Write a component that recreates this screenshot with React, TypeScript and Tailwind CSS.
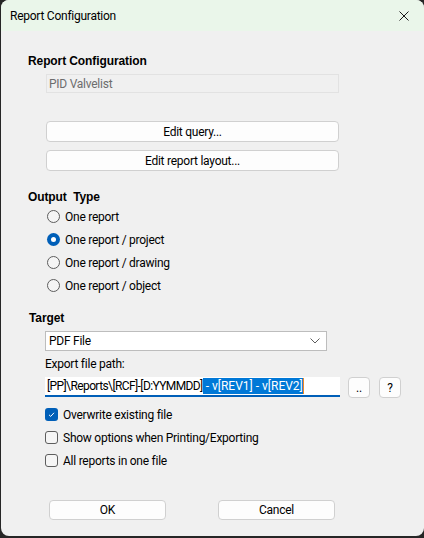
import { useState } from 'react';

const ui = { fontFamily: 'Roboto, "Noto Sans", sans-serif', letterSpacing: '-0.25px' };
const head = { fontFamily: '"Liberation Sans", Arial, sans-serif', letterSpacing: '-0.1px' };

function Radio({ label, checked }: { label: string; checked?: boolean }) {
  return (
    <div className="flex items-center h-[23px] pl-[46px]">
      {checked ? (
        <span className="w-[13px] h-[13px] rounded-full bg-[#005fb8] flex items-center justify-center">
          <span className="w-[5px] h-[5px] rounded-full bg-white" />
        </span>
      ) : (
        <span className="w-[13px] h-[13px] rounded-full border border-[#5d5d5d] bg-[#f5f5f5]" />
      )}
      <span className="ml-[5px] text-[12px] text-black">{label}</span>
    </div>
  );
}

function Check({ label, checked }: { label: string; checked?: boolean }) {
  return (
    <div className="flex items-center h-[23px] pl-[44px]">
      {checked ? (
        <span className="w-[13px] h-[13px] rounded-[3px] bg-[#005fb8] flex items-center justify-center">
          <svg width="9" height="9" viewBox="0 0 9 9">
            <path d="M2 4.8 L3.7 6.4 L7 2.8" fill="none" stroke="#fff" strokeWidth="1" />
          </svg>
        </span>
      ) : (
        <span className="w-[13px] h-[13px] rounded-[3px] border border-[#5d5d5d] bg-[#f5f5f5]" />
      )}
      <span className="ml-[5px] text-[12px] text-black">{label}</span>
    </div>
  );
}

function Btn({ children, className }: { children: React.ReactNode; className: string }) {
  return (
    <div
      className={`bg-[#fdfdfd] border border-[#d0d0d0] rounded-[4px] flex items-center justify-center text-[12px] text-black ${className}`}
    >
      {children}
    </div>
  );
}

export default function App() {
  const [target] = useState('PDF File');

  return (
    <div className="w-[424px] h-[538px] bg-[#262626] pl-px" style={ui}>
      <div className="w-[423px] h-[536px] rounded-[8px] bg-[#f0f0f0] overflow-hidden flex flex-col">
        {/* Title bar */}
        <div className="h-[31px] bg-[#eaf6ea] flex items-center justify-between pl-[9px] pr-[15px]">
          <span className="text-[12px] text-black">Report Configuration</span>
          <svg width="10" height="10" viewBox="0 0 10 10">
            <path d="M0.5 0.5 L9.5 9.5 M9.5 0.5 L0.5 9.5" stroke="#1a1a1a" strokeWidth="1" />
          </svg>
        </div>

        {/* Report configuration */}
        <div className="mt-[22px] pl-[27px] text-[12px] leading-[16px] font-bold text-black" style={head}>
          Report Configuration
        </div>
        <div className="mt-[5px] ml-[45px] w-[293px] h-[19px] border border-[#e2e2e2] flex items-center pl-[2px] text-[12px] text-[#6d6d6d]">
          PID Valvelist
        </div>
        <Btn className="mt-[28px] ml-[45px] w-[293px] h-[21px]">Edit query...</Btn>
        <Btn className="mt-[8px] ml-[45px] w-[293px] h-[21px]">Edit report layout...</Btn>

        {/* Output type */}
        <div className="mt-[18px] pl-[27px] text-[12px] leading-[16px] font-bold text-black" style={head}>
          Output&nbsp;&nbsp;Type
        </div>
        <Radio label="One report" />
        <Radio label="One report / project" checked />
        <Radio label="One report / drawing" />
        <Radio label="One report / object" />

        {/* Target */}
        <div className="mt-[13px] pl-[28px] text-[12px] leading-[16px] font-bold text-black" style={head}>
          Target
        </div>
        <div className="mt-[5px] ml-[44px] w-[282px] h-[20px] bg-white border border-[#bdbdbd] flex items-center justify-between pl-[3px] pr-[6px] text-[12px] text-black">
          <span>{target}</span>
          <svg width="10" height="6" viewBox="0 0 10 6">
            <path d="M0.5 0.5 L5 5 L9.5 0.5" fill="none" stroke="#5d5d5d" strokeWidth="1" />
          </svg>
        </div>
        <div className="mt-[5px] pl-[44px] text-[12px] leading-[16px] text-black">Export file path:</div>
        <div className="mt-[5px] ml-[44px] flex items-start">
          <div className="w-[295px] h-[20px] bg-white border-b-2 border-[#005fb8] flex items-center pl-[2px] text-[12px] text-black whitespace-nowrap">
            <span className="tracking-[-0.6px]">[PP]\Reports\[RCF]-[D:YYMMDD]</span>
            <span className="bg-[#0078d7] text-white h-[16px] flex items-center tracking-[0px]">&nbsp;- v[REV1] - v[REV2]</span>
            <span className="w-px h-[16px] bg-[#f08a24]" />
          </div>
          <Btn className="ml-[8px] w-[22px] h-[21px] text-[#555]">..</Btn>
          <Btn className="ml-[9px] w-[22px] h-[21px]">?</Btn>
        </div>

        {/* Options */}
        <div className="mt-[5px]">
          <Check label="Overwrite existing file" checked />
          <Check label="Show options when Printing/Exporting" />
          <Check label="All reports in one file" />
        </div>

        {/* Footer */}
        <div className="mt-[28px] flex pl-[48px]">
          <Btn className="w-[117px] h-[20px]">OK</Btn>
          <Btn className="ml-[52px] w-[117px] h-[20px]">Cancel</Btn>
        </div>
      </div>
    </div>
  );
}
